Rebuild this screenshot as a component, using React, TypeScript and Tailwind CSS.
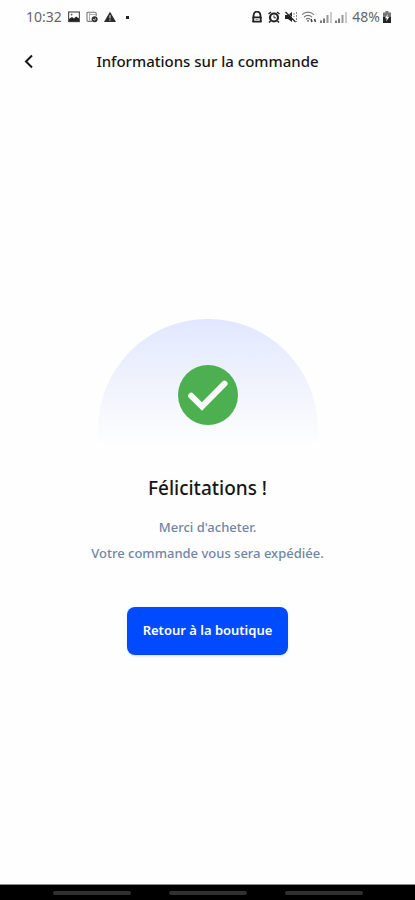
// OrderSuccess - Confirmation screen shown once an order has been placed

import React from 'react';

const StatusBar: React.FC = () => (
  <div className="flex h-[34px] items-center justify-between pl-[26px] pr-6 text-[#666]">
    <div className="flex items-center gap-[6px]">
      <span className="text-sm leading-5">10:32</span>
      {/* Picture */}
      <svg width="12" height="12" viewBox="0 0 12 12" fill="none">
        <rect x="0.6" y="1" width="10.8" height="9.6" stroke="#555" strokeWidth="1.2" />
        <path d="M1 10.5V8l3-2 2 1.5 2-2 3 2v3z" fill="#222" />
        <circle cx="3.6" cy="3.6" r="0.9" fill="#555" />
      </svg>
      {/* Synced calendar */}
      <svg width="12" height="12" viewBox="0 0 12 12" fill="none">
        <path d="M6 10.4H2.2Q1 10.4 1 9.2V2.4Q1 1.2 2.2 1.2H9Q10.2 1.2 10.2 2.4V5" stroke="#777" strokeWidth="1.1" />
        <path d="M3.5 1.5v8M4 3.5h6" stroke="#aaa" />
        <circle cx="8.6" cy="8.2" r="3" fill="#333" />
        <path d="M7.2 8.2l1 1L10 7.4" stroke="#fff" strokeWidth="0.9" />
      </svg>
      {/* Warning */}
      <svg width="12" height="12" viewBox="0 0 12 12">
        <path d="M6 0.8L12 11H0z" fill="#2b2b2b" />
        <path d="M6 4v3.6M6 8.6v1.2" stroke="#ddd" strokeWidth="1.1" />
      </svg>
      <span className="ml-1 size-[3px] bg-[#222]" />
    </div>

    <div className="flex items-center gap-[3px]">
      {/* Rounded lock */}
      <svg width="14" height="12" viewBox="0 0 14 12" fill="none">
        <path d="M3.6 6V4a3.4 3.4 0 0 1 6.8 0v2" stroke="#222" strokeWidth="1.8" />
        <path d="M2.4 6.4h9.2M2.4 10.6h9.2" stroke="#222" strokeWidth="1.8" />
        <path d="M3.3 6v5M10.7 6v5" stroke="#222" strokeWidth="1.8" />
        <path d="M5.5 8.5h3" stroke="#999" />
      </svg>
      {/* Alarm */}
      <svg width="14" height="12" viewBox="0 0 14 12" fill="none">
        <path d="M1.5 3L4 1M12.5 3L10 1M3.5 10L2 11.5M10.5 10l1.5 1.5" stroke="#222" strokeWidth="1.5" />
        <circle cx="7" cy="6.5" r="4" stroke="#222" strokeWidth="2.2" />
        <path d="M7 4.5v2.3h2" stroke="#333" />
      </svg>
      {/* Muted */}
      <svg width="14" height="12" viewBox="0 0 14 12" fill="none">
        <path d="M1 4h3l4-3v10L4 8H1z" fill="#222" />
        <path d="M2.5 1l9 9" stroke="#fff" strokeWidth="0.8" />
        <path d="M1.5 1l10 10" stroke="#222" strokeWidth="1.2" />
        <path d="M10 2v4M12.5 1v10" stroke="#888" strokeDasharray="2 1" />
      </svg>
      {/* Wifi */}
      <svg width="16" height="12" viewBox="0 0 16 12" fill="none">
        <path d="M1 3.6Q7 -1.4 13 3.6M3 6Q7 2.8 11 6M5 8.2Q7 6.6 9 8.2" stroke="#777" strokeWidth="1.2" />
        <circle cx="7" cy="9.8" r="0.9" fill="#555" />
        <path d="M10 8l1 3M13.5 8l1 3" stroke="#444" strokeWidth="1.6" />
      </svg>
      <Signal />
      <Signal />
      <span className="ml-[2px] text-sm leading-5">48%</span>
      {/* Charging battery */}
      <svg width="8" height="12" viewBox="0 0 8 12">
        <path d="M2.5 0h3v1.5H8V12H0V1.5h2.5z" fill="#777" />
        <path d="M0 6h8v6H0z" fill="#222" />
        <path d="M4.8 3L2 7.2h1.8L3.2 10.5 6.2 6H4.3z" fill="#fff" />
      </svg>
    </div>
  </div>
);

const Signal: React.FC = () => (
  <svg width="12" height="12" viewBox="0 0 12 12">
    <path d="M0 9.5h2V12H0zM3 7.5h2V12H3z" fill="#777" />
    <path d="M6.5 4h2v8h-2z" fill="#999" />
    <path d="M10 1h2v11h-2z" fill="#ccc" />
  </svg>
);

const Header: React.FC = () => (
  <header className="grid grid-cols-[24px_1fr_24px] items-center px-4 pt-[15px]">
    <button type="button" aria-label="Retour" className="flex size-6 items-center justify-center">
      <svg width="24" height="24" viewBox="0 0 24 24" fill="none">
        <path d="M16 6.5L10 12.5L16 18.5" stroke="#161616" strokeWidth="2" />
      </svg>
    </button>
    <h1 className="text-center text-[15px] leading-6 font-medium text-[#161616]">
      Informations sur la commande
    </h1>
  </header>
);

const SuccessBadge: React.FC = () => (
  <div className="flex h-32 w-[220px] justify-center rounded-t-full bg-linear-to-b from-[#e1e7ff] via-[#f0f3fd] to-[#fefefe] pt-[46px]">
    <svg width="60" height="60" viewBox="0 0 60 60" fill="none">
      <circle cx="30" cy="30" r="30" fill="#4caf50" />
      <path
        d="M13.2 30.8L24 41.4L46.5 18.6"
        stroke="#fafafa"
        strokeWidth="6"
        strokeLinecap="round"
      />
    </svg>
  </div>
);

const NavigationBar: React.FC = () => (
  <div className="flex h-4 items-center justify-center gap-[38px] border-t border-[#8a8f8d] bg-black">
    <span className="h-1 w-[78px] rounded-full bg-[#303030]" />
    <span className="h-1 w-[78px] rounded-full bg-[#303030]" />
    <span className="h-1 w-[78px] rounded-full bg-[#303030]" />
  </div>
);

export default function App() {
  return (
    <div className="flex min-h-screen flex-col bg-[#fefefe] font-['Noto_Sans',sans-serif]">
      <StatusBar />
      <Header />

      <main className="flex flex-1 flex-col items-center justify-center px-6 pt-4 text-center">
        <SuccessBadge />
        <h2 className="mt-[27px] text-[19px] leading-7 font-medium text-[#161616]">Félicitations !</h2>
        <p className="mt-3 text-[13px] leading-[26px] font-medium text-[#7186a3]">
          Merci d'acheter.
          <br />
          Votre commande vous sera expédiée.
        </p>
        <button
          type="button"
          className="mt-[41px] h-12 rounded-lg bg-[#004bff] px-4 text-[13px] font-semibold text-white shadow"
        >
          Retour à la boutique
        </button>
      </main>

      <NavigationBar />
    </div>
  );
}
